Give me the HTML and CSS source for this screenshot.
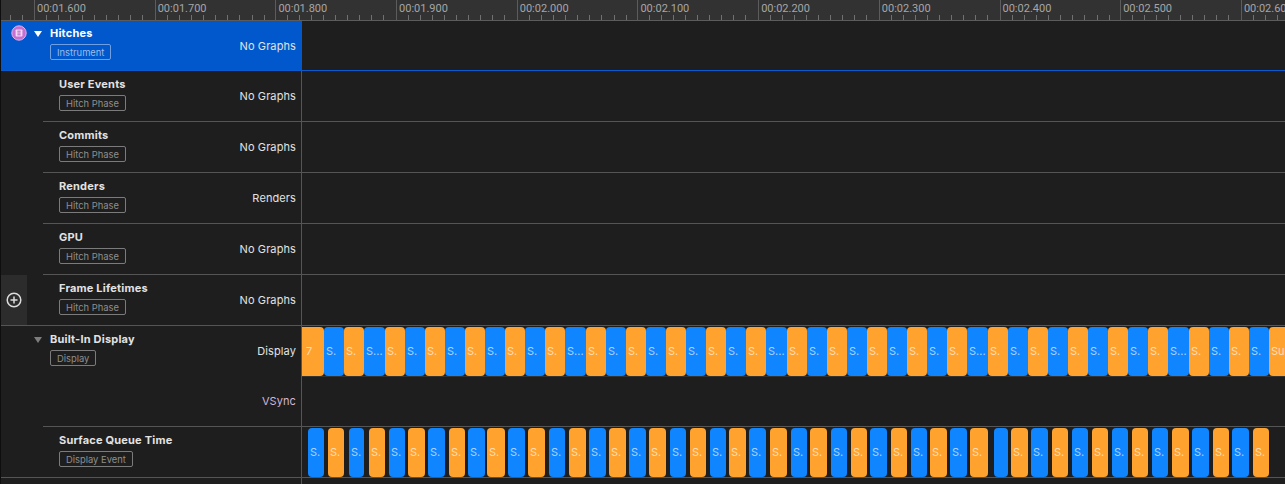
FILE: index.html
```html
<!DOCTYPE html>
<html lang="en">
<head>
  <meta charset="UTF-8" />
  <title>Instruments - Hitches</title>
  <link rel="stylesheet" href="styles.css">
</head>
<body>
  <div class="ruler">
    <div class="ruler-stub"></div>
    <div class="ruler-cell">00:01.600</div>
    <div class="ruler-cell">00:01.700</div>
    <div class="ruler-cell">00:01.800</div>
    <div class="ruler-cell">00:01.900</div>
    <div class="ruler-cell">00:02.000</div>
    <div class="ruler-cell">00:02.100</div>
    <div class="ruler-cell">00:02.200</div>
    <div class="ruler-cell">00:02.300</div>
    <div class="ruler-cell">00:02.400</div>
    <div class="ruler-cell">00:02.500</div>
    <div class="ruler-cell">00:02.600</div>
  </div>

  <div class="row selected">
    <div class="head">
      <svg class="instrument-icon" width="16" height="16" viewBox="0 0 16 16">
        <circle cx="8" cy="8" r="7.2" fill="#c670d2" stroke="#e3b0e8" stroke-width="1"/>
        <rect x="4.6" y="4.4" width="6.8" height="7.2" rx="0.8" fill="#f2d8f4"/>
        <path d="M6.4 6.2h3.2M6.4 8h3.2M6.4 9.8h3.2" stroke="#b65cc4" stroke-width="1"/>
      </svg>
      <span class="disclosure"></span>
      <div class="info">
        <div class="title">Hitches</div>
        <span class="tag">Instrument</span>
      </div>
      <div class="graph-label">No Graphs</div>
    </div>
    <div class="track"></div>
  </div>

  <div class="group">
    <div class="gutter">
      <div class="add-button">
        <svg width="16" height="16" viewBox="0 0 16 16">
          <circle cx="8" cy="8" r="6.8" fill="none" stroke="#dcdcdc" stroke-width="1.5"/>
          <path d="M8 4.5v7M4.5 8h7" stroke="#dcdcdc" stroke-width="1.5"/>
        </svg>
      </div>
    </div>
    <div class="group-rows">
      <div class="row">
        <div class="head sub">
          <div class="info"><div class="title">User Events</div><span class="tag">Hitch Phase</span></div>
          <div class="graph-label">No Graphs</div>
        </div>
        <div class="track"></div>
      </div>
      <div class="row">
        <div class="head sub">
          <div class="info"><div class="title">Commits</div><span class="tag">Hitch Phase</span></div>
          <div class="graph-label">No Graphs</div>
        </div>
        <div class="track"></div>
      </div>
      <div class="row">
        <div class="head sub">
          <div class="info"><div class="title">Renders</div><span class="tag">Hitch Phase</span></div>
          <div class="graph-label">Renders</div>
        </div>
        <div class="track"></div>
      </div>
      <div class="row">
        <div class="head sub">
          <div class="info"><div class="title">GPU</div><span class="tag">Hitch Phase</span></div>
          <div class="graph-label">No Graphs</div>
        </div>
        <div class="track"></div>
      </div>
      <div class="row">
        <div class="head sub">
          <div class="info"><div class="title">Frame Lifetimes</div><span class="tag">Hitch Phase</span></div>
          <div class="graph-label">No Graphs</div>
        </div>
        <div class="track"></div>
      </div>
    </div>
  </div>
  <div class="divider"></div>

  <div class="row tall">
    <div class="head display-head">
      <span class="disclosure muted"></span>
      <div class="info"><div class="title">Built-In Display</div><span class="tag">Display</span></div>
      <div class="graph-labels">
        <div class="graph-label">Display</div>
        <div class="graph-label vsync">VSync</div>
      </div>
    </div>
    <div class="track">
      <div class="bars display-bars">
        <div class="bar orange first">7</div>
        <div class="bar blue">S.</div>
        <div class="bar orange">S.</div>
        <div class="bar blue wide">S...</div>
        <div class="bar orange">S.</div>
        <div class="bar blue">S.</div>
        <div class="bar orange">S.</div>
        <div class="bar blue">S.</div>
        <div class="bar orange">S.</div>
        <div class="bar blue">S.</div>
        <div class="bar orange">S.</div>
        <div class="bar blue">S.</div>
        <div class="bar orange">S.</div>
        <div class="bar blue wide">S...</div>
        <div class="bar orange">S.</div>
        <div class="bar blue">S.</div>
        <div class="bar orange">S.</div>
        <div class="bar blue">S.</div>
        <div class="bar orange">S.</div>
        <div class="bar blue">S.</div>
        <div class="bar orange">S.</div>
        <div class="bar blue">S.</div>
        <div class="bar orange">S.</div>
        <div class="bar blue wide">S...</div>
        <div class="bar orange">S.</div>
        <div class="bar blue">S.</div>
        <div class="bar orange">S.</div>
        <div class="bar blue">S.</div>
        <div class="bar orange">S.</div>
        <div class="bar blue">S.</div>
        <div class="bar orange">S.</div>
        <div class="bar blue">S.</div>
        <div class="bar orange">S.</div>
        <div class="bar blue wide">S...</div>
        <div class="bar orange">S.</div>
        <div class="bar blue">S.</div>
        <div class="bar orange">S.</div>
        <div class="bar blue">S.</div>
        <div class="bar orange">S.</div>
        <div class="bar blue">S.</div>
        <div class="bar orange">S.</div>
        <div class="bar blue">S.</div>
        <div class="bar orange">S.</div>
        <div class="bar blue wide">S...</div>
        <div class="bar orange">S.</div>
        <div class="bar blue">S.</div>
        <div class="bar orange">S.</div>
        <div class="bar blue">S.</div>
        <div class="bar orange">Sur</div>
      </div>
    </div>
  </div>

  <div class="group">
    <div class="gutter"></div>
    <div class="group-rows lined">
      <div class="row">
        <div class="head sub">
          <div class="info"><div class="title">Surface Queue Time</div><span class="tag">Display Event</span></div>
        </div>
        <div class="track">
          <div class="bars event-bars">
            <div class="bar blue" style="width:16px;margin-left:6px">S.</div>
            <div class="bar orange" style="width:16px;margin-left:4px">S.</div>
            <div class="bar blue" style="width:15px;margin-left:5px">S.</div>
            <div class="bar orange" style="width:16px;margin-left:5px">S.</div>
            <div class="bar blue" style="width:16px;margin-left:4px">S.</div>
            <div class="bar orange" style="width:17px;margin-left:3px">S.</div>
            <div class="bar blue" style="width:17px;margin-left:3px">S.</div>
            <div class="bar orange" style="width:16px;margin-left:4px">S.</div>
            <div class="bar blue" style="width:17px;margin-left:3px">S.</div>
            <div class="bar orange" style="width:18px;margin-left:2px">S.</div>
            <div class="bar blue" style="width:17px;margin-left:3px">S.</div>
            <div class="bar orange" style="width:17px;margin-left:3px">S.</div>
            <div class="bar blue" style="width:16px;margin-left:4px">S.</div>
            <div class="bar orange" style="width:17px;margin-left:4px">S.</div>
            <div class="bar blue" style="width:17px;margin-left:3px">S.</div>
            <div class="bar orange" style="width:17px;margin-left:3px">S.</div>
            <div class="bar blue" style="width:17px;margin-left:3px">S.</div>
            <div class="bar orange" style="width:17px;margin-left:3px">S.</div>
            <div class="bar blue" style="width:16px;margin-left:4px">S.</div>
            <div class="bar orange" style="width:16px;margin-left:4px">S.</div>
            <div class="bar blue" style="width:16px;margin-left:4px">S.</div>
            <div class="bar orange" style="width:17px;margin-left:3px">S.</div>
            <div class="bar blue" style="width:17px;margin-left:3px">S.</div>
            <div class="bar orange" style="width:17px;margin-left:4px">S.</div>
            <div class="bar blue" style="width:16px;margin-left:4px">S.</div>
            <div class="bar orange" style="width:17px;margin-left:3px">S.</div>
            <div class="bar blue" style="width:16px;margin-left:4px">S.</div>
            <div class="bar orange" style="width:16px;margin-left:4px">S.</div>
            <div class="bar blue" style="width:17px;margin-left:3px">S.</div>
            <div class="bar orange" style="width:16px;margin-left:4px">S.</div>
            <div class="bar blue" style="width:16px;margin-left:4px">S.</div>
            <div class="bar orange" style="width:17px;margin-left:3px">S.</div>
            <div class="bar blue" style="width:17px;margin-left:3px">S.</div>
            <div class="bar orange" style="width:18px;margin-left:3px">S.</div>
            <div class="bar blue" style="width:14px;margin-left:6px"></div>
            <div class="bar orange" style="width:17px;margin-left:3px">S.</div>
            <div class="bar blue" style="width:17px;margin-left:3px">S.</div>
            <div class="bar orange" style="width:16px;margin-left:4px">S.</div>
            <div class="bar blue" style="width:16px;margin-left:4px">S.</div>
            <div class="bar orange" style="width:16px;margin-left:4px">S.</div>
            <div class="bar blue" style="width:16px;margin-left:4px">S.</div>
            <div class="bar orange" style="width:16px;margin-left:4px">S.</div>
            <div class="bar blue" style="width:16px;margin-left:4px">S.</div>
            <div class="bar orange" style="width:17px;margin-left:4px">S.</div>
            <div class="bar blue" style="width:17px;margin-left:3px">S.</div>
            <div class="bar orange" style="width:16px;margin-left:4px">S.</div>
            <div class="bar blue" style="width:17px;margin-left:3px">S.</div>
            <div class="bar orange" style="width:16px;margin-left:4px">S.</div>
          </div>
        </div>
      </div>
    </div>
  </div>
  <div class="divider"></div>

  <div class="row filler">
    <div class="head"></div>
    <div class="track"></div>
  </div>
</body>
</html>
```

FILE: styles.css
```css
* {
  box-sizing: border-box;
}
html, body {
  height: 100%;
}
body {
  margin: 0;
  background: #1e1e1e;
  border-left: 1px solid #0e0e0e;
  font-family: Inter, "Liberation Sans", sans-serif;
  color: #e2e2e2;
  overflow: hidden;
}

/* time ruler */
.ruler {
  display: flex;
  height: 21px;
  background: #323232;
  border-bottom: 1px solid #5c5c5c;
  overflow: hidden;
}
.ruler-stub {
  flex: 0 0 33px;
  background-image: repeating-linear-gradient(to left, transparent 0 11.07px, #707070 11.07px 12.07px);
  background-size: 100% 5px;
  background-position: bottom;
  background-repeat: no-repeat;
}
.ruler-cell {
  flex: 0 0 120.7px;
  padding: 2px 0 0 2px;
  border-left: 1px solid #5c5c5c;
  font-family: Roboto, "Liberation Sans", sans-serif;
  font-size: 11px;
  line-height: 13px;
  color: #a6a6a6;
  background-image: repeating-linear-gradient(to right, transparent 0 11.07px, #707070 11.07px 12.07px);
  background-size: 100% 5px;
  background-position: bottom;
  background-repeat: no-repeat;
}

/* rows */
.row {
  display: flex;
  height: 51px;
  border-bottom: 1px solid #555;
}
.row.selected {
  height: 50px;
  border-bottom: 1px solid #0a5bd0;
}
.row.tall {
  height: 100px;
  border-bottom: none;
}
.row.filler {
  height: 10px;
  border-bottom: none;
}
.head {
  display: flex;
  flex: 0 0 301px;
  padding-right: 5px;
  border-right: 1px solid #555;
}
.head.sub {
  flex-basis: 259px;
  padding-left: 16px;
}
.display-head {
  padding-left: 33px;
}
.selected .head {
  padding-left: 10px;
  background: #0058cc;
  border-right-color: #0058cc;
  color: #fff;
}
.track {
  flex: 1;
  min-width: 0;
  overflow: hidden;
}

.group {
  display: flex;
}
.gutter {
  flex: 0 0 42px;
  display: flex;
  flex-direction: column;
  justify-content: flex-end;
}
.group-rows {
  flex: 1;
  min-width: 0;
}
.group-rows.lined {
  border-top: 1px solid #555;
}
.group-rows .row:last-child {
  border-bottom: none;
  height: 50px;
}
.divider {
  height: 1px;
  background: #555;
}
.add-button {
  display: flex;
  align-items: center;
  justify-content: center;
  width: 26px;
  height: 50px;
  background: #2c2c2c;
}

/* head content */
.info {
  flex: 1;
  padding-top: 6px;
}
.selected .info {
  padding-top: 5px;
}
.title {
  font-size: 11px;
  font-weight: 700;
  line-height: 14px;
  margin-bottom: 4px;
  letter-spacing: 0.2px;
}
.tag {
  display: block;
  width: fit-content;
  height: 16px;
  padding: 0 6px;
  border: 1px solid #7b7b7b;
  border-radius: 2px;
  font-size: 9.4px;
  line-height: 15px;
  color: #8f8f8f;
}
.selected .tag {
  border-color: #6e9fe2;
  color: #9dbdea;
}
.graph-label {
  align-self: center;
  font-size: 11px;
  letter-spacing: 0.1px;
  color: #e2e2e2;
}
.graph-labels {
  display: flex;
  flex-direction: column;
  justify-content: space-around;
  align-items: flex-end;
}
.graph-label.vsync {
  align-self: flex-end;
  color: #cdb8dc;
}
.instrument-icon {
  flex: none;
  margin: 4px 7px 0 0;
}
.disclosure {
  flex: none;
  width: 0;
  height: 0;
  margin: 10px 8px 0 0;
  border-left: 4.5px solid transparent;
  border-right: 4.5px solid transparent;
  border-top: 6px solid #fff;
}
.disclosure.muted {
  margin-top: 11px;
  border-top-color: #7d7d7d;
}

/* timeline bars */
.bars {
  display: flex;
  height: 50px;
}
.display-bars {
  height: 51px;
  padding-top: 1px;
  border-bottom: 1px solid #333;
}
.event-bars {
  padding-top: 1px;
}
.bar {
  flex: none;
  height: 49px;
  padding-left: 2px;
  border-radius: 4px;
  font-size: 11px;
  line-height: 49px;
  white-space: nowrap;
  overflow: hidden;
  color: rgba(255, 255, 255, 0.65);
}
.display-bars .bar {
  width: 20px;
}
.display-bars .bar.first {
  width: 22px;
  padding-left: 4px;
  border-radius: 0 4px 4px 0;
}
.display-bars .bar.wide {
  width: 21px;
}
.blue {
  background: #0f85ff;
}
.orange {
  background: #ffa22e;
}
```
